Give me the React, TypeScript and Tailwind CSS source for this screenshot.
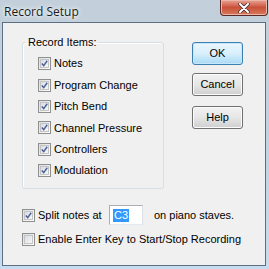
import React from "react";

const font = { fontFamily: '"Liberation Sans", Tahoma, sans-serif' };

const Check = ({ checked }: { checked: boolean }) => (
  <span className="flex h-[13px] w-[13px] shrink-0 items-center justify-center border border-[#8e8f8f] bg-gradient-to-br from-[#dcdcdc] to-[#ffffff]">
    <span className="flex h-[9px] w-[9px] items-center justify-center border border-[#c4c4c4] bg-gradient-to-br from-[#d8dde3] to-[#f6f6f6]">
      {checked && (
        <svg width="9" height="9" viewBox="0 0 9 9">
          <path d="M1 4.5 L3.5 7.2 L8 1" fill="none" stroke="#4a5f97" strokeWidth="1.8" />
        </svg>
      )}
    </span>
  </span>
);

const Item = ({ label }: { label: string }) => (
  <div className="flex h-[21.4px] items-center gap-[3px]">
    <Check checked />
    <span className="text-[11px] text-black">{label}</span>
  </div>
);

const Btn = ({ label, def }: { label: string; def?: boolean }) => (
  <button
    className={
      def
        ? "h-[23px] w-[51px] rounded-[3px] border border-[#3c7fb1] bg-gradient-to-b from-[#eaf6fd] via-[#d9f0fc] to-[#a7d9f5] text-[11px] text-black shadow-[inset_0_0_0_1px_#c6e7fb]"
        : "h-[23px] w-[51px] rounded-[3px] border border-[#707070] bg-gradient-to-b from-[#f2f2f2] via-[#e6e6e6] to-[#cfcfcf] text-[11px] text-black shadow-[inset_0_0_0_1px_#fcfcfc]"
    }
  >
    {label}
  </button>
);

export default function App() {
  const items = ["Notes", "Program Change", "Pitch Bend", "Channel Pressure", "Controllers", "Modulation"];
  return (
    <div className="flex h-[269px] w-[269px] flex-col overflow-hidden bg-gradient-to-b from-[#c3cfda] via-[#bfd3e6] to-[#c8dcef]" style={font}>
      <div className="flex h-[22px] items-start">
        <span
          className="ml-[4px] mt-[3px] text-[12px] text-[#1b1b1b] [text-shadow:0_0_6px_#ffffff,0_0_3px_#ffffff]"
          style={{ fontFamily: '"Open Sans", "Liberation Sans", sans-serif' }}
        >
          Record Setup
        </span>
        <div className="ml-auto mr-[1px] flex h-[16px] w-[48px] items-center justify-center rounded-b-[4px] border border-t-0 border-[#5a2a2a] bg-gradient-to-b from-[#e8a393] via-[#c9503a] to-[#d77a5b] shadow-[inset_0_0_0_1px_#eab6a8]">
          <svg width="12" height="10" viewBox="0 0 12 10">
            <path d="M2 1 L10 9 M10 1 L2 9" stroke="#3b2b2b" strokeWidth="3.4" strokeLinecap="round" />
            <path d="M2 1 L10 9 M10 1 L2 9" stroke="#ffffff" strokeWidth="2" strokeLinecap="round" />
          </svg>
        </div>
      </div>
      <div className="ml-[2px] mr-[3px] flex h-[244px] flex-col border border-[#5d6f82] bg-[#f0f0f0] pl-[19px] pt-[12px]">
        <div className="flex items-start">
          <fieldset className="h-[154px] w-[142px] rounded-[3px] border border-[#d5dfe5] shadow-[inset_1px_1px_0_#ffffff]">
            <legend className="ml-[3px] px-[2px] text-[11px] leading-[15px] text-black">Record Items:</legend>
            <div className="mt-[3px] flex flex-col pl-[15px]">
              {items.map((it) => (
                <Item key={it} label={it} />
              ))}
            </div>
          </fieldset>
          <div className="ml-[28px] mt-[7px] flex flex-col gap-[8px]">
            <Btn label="OK" def />
            <div className="flex flex-col gap-[10px]">
              <Btn label="Cancel" />
              <Btn label="Help" />
            </div>
          </div>
        </div>
        <div className="mt-[15px] flex h-[22px] items-center">
          <Check checked />
          <span className="ml-[3px] w-[71px] text-[11px] text-black">Split notes at</span>
          <span className="flex h-[20px] w-[34px] items-center border border-[#abadb3] border-b-[#e3e9ef] border-r-[#dbdfe6] bg-white pl-[3px]">
            <span className="bg-[#3399ff] px-[1px] text-[11px] leading-[13px] text-white">C3</span>
          </span>
          <span className="ml-[11px] text-[11px] text-black">on piano staves.</span>
        </div>
        <div className="mt-[2px] flex h-[22px] items-center">
          <Check checked={false} />
          <span className="ml-[3px] text-[11px] text-black">Enable Enter Key to Start/Stop Recording</span>
        </div>
      </div>
    </div>
  );
}
